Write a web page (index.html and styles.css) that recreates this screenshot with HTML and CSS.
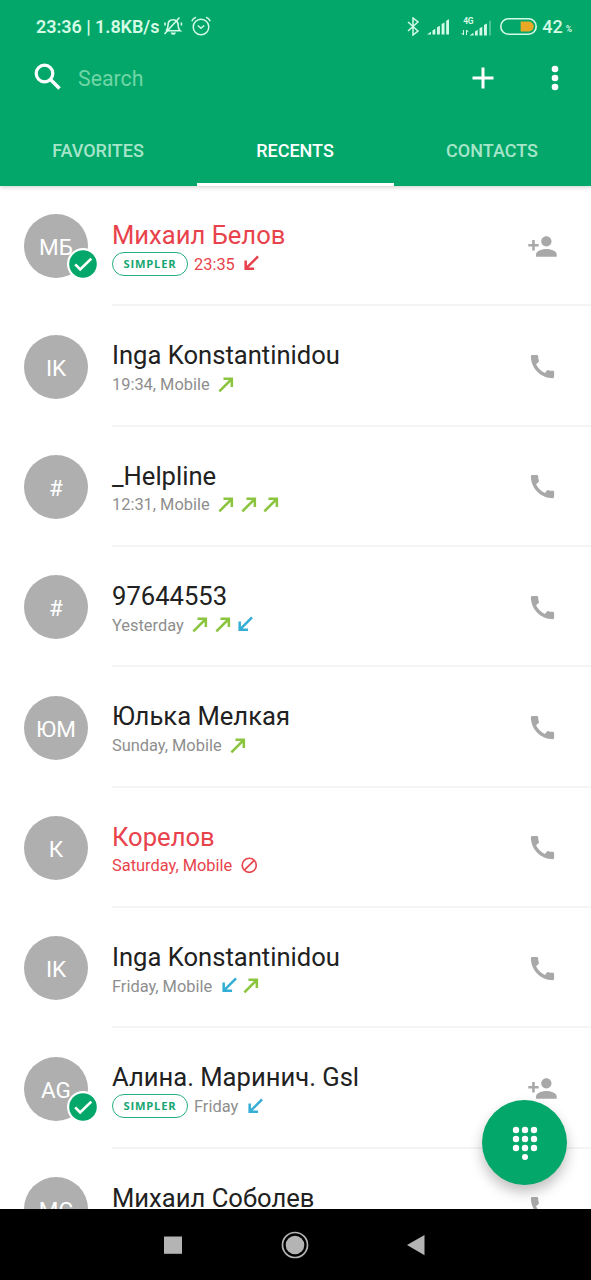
FILE: index.html
```html
<!DOCTYPE html>
<html lang="en">
<head>
<meta charset="utf-8">
<title>Recents</title>
<link rel="stylesheet" href="styles.css">
</head>
<body>
<svg class="sprite" aria-hidden="true">
  <symbol id="made" viewBox="0 0 24 24"><path d="M9 4.800v2.700h5.800L3.700 18.600 5.600 20.500 16.600 9.500V15H19.300V4.800z"/></symbol>
  <symbol id="received" viewBox="0 0 24 24"><path d="M20.200 5.600L18.300 3.700 7.400 14.700V9H4.700v10.300h10.300v-2.700H9.200z"/></symbol>
  <symbol id="blocked" viewBox="0 0 24 24"><circle cx="12" cy="12" r="7.500" fill="none" stroke="currentColor" stroke-width="1.800"/><path d="M7 17L17 7" stroke="currentColor" stroke-width="1.800"/></symbol>
  <symbol id="call" viewBox="0 0 24 24"><path d="M20.010 15.380c-1.230 0-2.420-.2-3.530-.56-.35-.12-.74-.03-1.010.24l-1.570 1.970c-2.830-1.350-5.480-3.900-6.890-6.830l1.950-1.660c.27-.28.35-.67.24-1.020-.37-1.110-.56-2.300-.56-3.530 0-.54-.45-.99-.99-.99H4.190C3.650 3 3 3.240 3 3.990 3 13.280 10.730 21 20.010 21c.71 0 .99-.63.99-1.180v-3.450c0-.54-.45-.99-.99-.99z"/></symbol>
  <symbol id="add-person" viewBox="0 0 24 24"><path d="M15 12c2.210 0 4-1.790 4-4s-1.790-4-4-4-4 1.790-4 4 1.790 4 4 4zm-9-2V7H4v3H1v2h3v3h2v-3h3v-2H6zm9 4c-2.670 0-8 1.340-8 4v2h16v-2c0-2.660-5.330-4-8-4z"/></symbol>
  <symbol id="check" viewBox="0 0 32 32"><circle cx="16" cy="16" r="16" fill="#fff"/><circle cx="16" cy="16" r="13.800" fill="#03a769"/><path d="M8.200 16.400l5 5L24.300 10.600" fill="none" stroke="#fff" stroke-width="2.700"/></symbol>
</svg>
<div class="screen">
  <header class="header">
    <div class="status">
      <div class="status-left">
        <span class="clock">23:36 | 1.8KB/s</span>
        <svg class="bell" viewBox="0 0 20 20"><g fill="none" stroke="currentColor" stroke-width="1.600"><path d="M4 14.800h13.200c-1.600-1.200-2-2.500-2-5C15.200 6 13 3.800 10 3.800S5 6 5 9.400c0 2.500-.4 4-2 5.400"/><path d="M1.500 18L16.500 1.500M2 6.500v3M18.400 6.500v3"/></g><path d="M7.500 16.500h5.500c-.5 1.700-1.500 2.300-2.700 2.300s-2.300-.6-2.800-2.300z" fill="currentColor"/></svg>
        <svg class="alarm" viewBox="0 0 20 20"><g fill="none" stroke="currentColor" stroke-width="1.500"><circle cx="10" cy="11" r="7.800"/><path d="M6.800 9.500l3.200 2.700 3.200-2.700M.8 5.200C1.600 3.300 3 2 5 1.300M19.200 5.200C18.400 3.300 17 2 15 1.300"/></g></svg>
      </div>
      <div class="status-right">
        <svg class="bluetooth" viewBox="0 0 12 19"><path d="M1 5l10 9-5 4V1l5 4-10 9" fill="none" stroke="currentColor" stroke-width="1.500"/></svg>
        <svg class="signal" viewBox="0 0 23 17"><path d="M0 16.500L4 13.700v2.800zM5.500 12.500l2.800-1.700v5.700H5.500zM10 9.300l2.900-1.500v8.700H10zM14.600 6l2.900-1.500v12h-2.900zM19.200 2.700L22 1.200v15.300h-2.800z" fill="currentColor"/></svg>
        <div class="lte">
          <span class="lte-label">4G</span>
          <svg class="lte-bars" viewBox="0 0 31 17"><path d="M8.500 16.500l4-2.800v2.800zM14 12.500l2.700-1.700v5.700H14zM18.500 9.300l2.800-1.500v8.700h-2.800zM23 6l2.900-1.500v12H23z" fill="currentColor"/><path d="M28 2.500L30 1v15.500h-2z" fill="currentColor" opacity=".35"/><path d="M2.500 11v5L.7 14M5.500 16V11l1.600 2" fill="none" stroke="currentColor" stroke-width="1"/></svg>
        </div>
        <svg class="battery" viewBox="0 0 37 17"><path d="M20.700 3.500h8a4.900 4.900 0 0 1 0 10h-8z" fill="#e9a825"/><rect x=".8" y=".8" width="35.400" height="15.400" rx="7.700" fill="none" stroke="currentColor" stroke-width="1.600"/></svg>
        <span class="percent">42</span><span class="percent-sign">%</span>
      </div>
    </div>
    <div class="toolbar">
      <svg class="search-icon" viewBox="0 0 27 27"><circle cx="10.500" cy="10.500" r="8.300" fill="none" stroke="#fff" stroke-width="3.200"/><path d="M16 16l9.500 9.500" stroke="#fff" stroke-width="3.600"/></svg>
      <span class="search-text">Search</span>
      <svg class="plus" viewBox="0 0 22 22"><path d="M11 .5v21M.5 11h21" stroke="#fff" stroke-width="3"/></svg>
      <svg class="more" viewBox="0 0 8 26"><g fill="#fff"><circle cx="4" cy="4" r="3.300"/><circle cx="4" cy="13" r="3.300"/><circle cx="4" cy="22" r="3.300"/></g></svg>
    </div>
    <nav class="tabs">
      <span class="tab">FAVORITES</span>
      <span class="tab tab-active">RECENTS</span>
      <span class="tab">CONTACTS</span>
    </nav>
  </header>

  <main class="list">
    <div class="row">
      <div class="avatar">МБ<svg class="check"><use href="#check"/></svg></div>
      <div class="body"><div class="name missed">Михаил Белов</div>
        <div class="detail missed"><span class="tag">SIMPLER</span><span class="when">23:35</span><svg class="arrow"><use href="#received"/></svg></div></div>
      <svg class="action"><use href="#add-person"/></svg>
    </div>
    <div class="row">
      <div class="avatar">IK</div>
      <div class="body"><div class="name">Inga Konstantinidou</div>
        <div class="detail"><span class="when">19:34, Mobile</span><svg class="arrow out"><use href="#made"/></svg></div></div>
      <svg class="action"><use href="#call"/></svg>
    </div>
    <div class="row">
      <div class="avatar">#</div>
      <div class="body"><div class="name">_Helpline</div>
        <div class="detail"><span class="when">12:31, Mobile</span><svg class="arrow out"><use href="#made"/></svg><svg class="arrow out"><use href="#made"/></svg><svg class="arrow out"><use href="#made"/></svg></div></div>
      <svg class="action"><use href="#call"/></svg>
    </div>
    <div class="row">
      <div class="avatar">#</div>
      <div class="body"><div class="name">97644553</div>
        <div class="detail"><span class="when">Yesterday</span><svg class="arrow out"><use href="#made"/></svg><svg class="arrow out"><use href="#made"/></svg><svg class="arrow in"><use href="#received"/></svg></div></div>
      <svg class="action"><use href="#call"/></svg>
    </div>
    <div class="row">
      <div class="avatar">ЮМ</div>
      <div class="body"><div class="name">Юлька Мелкая</div>
        <div class="detail"><span class="when">Sunday, Mobile</span><svg class="arrow out"><use href="#made"/></svg></div></div>
      <svg class="action"><use href="#call"/></svg>
    </div>
    <div class="row">
      <div class="avatar">К</div>
      <div class="body"><div class="name missed">Корелов</div>
        <div class="detail missed"><span class="when">Saturday, Mobile</span><svg class="arrow"><use href="#blocked"/></svg></div></div>
      <svg class="action"><use href="#call"/></svg>
    </div>
    <div class="row">
      <div class="avatar">IK</div>
      <div class="body"><div class="name">Inga Konstantinidou</div>
        <div class="detail"><span class="when">Friday, Mobile</span><svg class="arrow in"><use href="#received"/></svg><svg class="arrow out"><use href="#made"/></svg></div></div>
      <svg class="action"><use href="#call"/></svg>
    </div>
    <div class="row">
      <div class="avatar">AG<svg class="check"><use href="#check"/></svg></div>
      <div class="body"><div class="name">Алина. Маринич. Gsl</div>
        <div class="detail"><span class="tag">SIMPLER</span><span class="when">Friday</span><svg class="arrow in"><use href="#received"/></svg></div></div>
      <svg class="action"><use href="#add-person"/></svg>
    </div>
    <div class="row">
      <div class="avatar">МС</div>
      <div class="body"><div class="name">Михаил Соболев</div></div>
      <svg class="action"><use href="#call"/></svg>
    </div>
  </main>

  <div class="fab">
    <svg class="dialpad" viewBox="0 0 26 34"><g fill="#fff"><circle cx="4" cy="4" r="3.200"/><circle cx="13" cy="4" r="3.200"/><circle cx="22" cy="4" r="3.200"/><circle cx="4" cy="13" r="3.200"/><circle cx="13" cy="13" r="3.200"/><circle cx="22" cy="13" r="3.200"/><circle cx="4" cy="22" r="3.200"/><circle cx="13" cy="22" r="3.200"/><circle cx="22" cy="22" r="3.200"/><circle cx="13" cy="31" r="3"/></g></svg>
  </div>

  <footer class="navbar">
    <svg class="nav-icon" viewBox="0 0 28 28"><path d="M5 5.500h18v17.300H5z" fill="#b4b4b4"/></svg>
    <svg class="nav-icon" viewBox="0 0 28 28"><circle cx="14" cy="14" r="12.500" fill="none" stroke="#b4b4b4" stroke-width="1.700"/><circle cx="14" cy="14" r="9.300" fill="#b4b4b4"/></svg>
    <svg class="nav-icon" viewBox="0 0 28 28"><path d="M5 14L22.500 4v20.200z" fill="#b4b4b4"/></svg>
  </footer>
</div>
</body>
</html>
```
FILE: styles.css
```css
* { box-sizing: border-box; }
body { margin: 0; background: #fff; font-family: Roboto, "Noto Sans", sans-serif; }
svg { display: block; flex: none; fill: currentColor; }
.sprite { position: absolute; width: 0; height: 0; }
.screen { position: relative; width: 591px; height: 1280px; overflow: hidden; display: flex; flex-direction: column; }

.header { position: relative; height: 186px; flex: none; background: #03a769; box-shadow: 0 1px 5px rgba(0,0,0,.2); display: flex; flex-direction: column; }
.status { height: 52px; padding: 0 19px 0 36px; display: flex; justify-content: space-between; color: #d4fbe6; }
.status-left, .status-right { display: flex; align-items: center; }
.clock { font-size: 18px; font-weight: 600; line-height: 20px; width: 124px; white-space: nowrap; padding-top: 2px; letter-spacing: -.05px; }
.bell { width: 20px; height: 20px; margin-left: 3px; }
.alarm { width: 20px; height: 20px; margin-left: 8px; }
.bluetooth { width: 12px; height: 19px; margin-right: 8px; }
.signal { width: 23px; height: 17px; margin-right: 11px; }
.lte { width: 31px; height: 19px; margin-right: 8px; position: relative; display: flex; align-items: flex-end; }
.lte-label { position: absolute; left: 2px; top: 0; font-size: 8.500px; line-height: 8px; font-weight: 700; letter-spacing: -.3px; }
.lte-bars { width: 31px; height: 17px; }
.battery { width: 37px; height: 17px; margin-right: 5px; }
.percent { font-size: 18px; line-height: 20px; font-weight: 500; padding-top: 1px; }
.percent-sign { font-size: 8.500px; line-height: 8px; font-weight: 600; margin: 5px 0 0 3px; }

.toolbar { height: 52px; padding: 0 32px 0 34px; display: flex; align-items: center; }
.search-icon { width: 27px; height: 27px; margin-top: -3px; }
.search-text { flex: 1; margin-left: 17px; padding-top: 1px; font-size: 21.300px; line-height: 26px; color: #70d6a6; }
.plus { width: 22px; height: 22px; margin-right: 57.500px; }
.more { width: 8px; height: 26px; }

.tabs { flex: 1; display: grid; grid-template-columns: repeat(3, 1fr); }
.tab { display: flex; align-items: center; justify-content: center; padding: 14px 1px 0 0; border-bottom: 3px solid transparent; font-size: 18px; font-weight: 500; color: #a6e5c9; }
.tab-active { color: #fff; border-bottom-color: #fff; }

.list { flex: 1; min-height: 0; overflow: hidden; }
.row { height: 120.350px; padding: 0 33px 0 24px; display: flex; align-items: center; background: linear-gradient(#f4f4f4, #f4f4f4) 112px 100% / 100% 2px no-repeat; }
.avatar { position: relative; width: 64px; height: 64px; flex: none; border-radius: 50%; background: #afafaf; color: #fff; font-size: 22.500px; display: flex; align-items: center; justify-content: center; padding-top: 2px; }
.check { position: absolute; left: 43px; top: 34px; width: 32px; height: 32px; }
.body { flex: 1; height: 100%; margin-left: 24px; padding-top: 34px; }
.name { font-size: 25.600px; line-height: 30px; color: #212121; white-space: nowrap; }
.detail { height: 27px; display: flex; align-items: center; font-size: 16.400px; color: #8e8e8e; white-space: nowrap; }
.name.missed, .detail.missed { color: #e8434c; }
.when { line-height: 20px; padding-top: 2px; }
.arrow { width: 22.500px; height: 22.500px; }
.when + .arrow { margin-left: 5.500px; }
.arrow.out { color: #8bc53f; }
.arrow.in { color: #35aed6; }
.tag { width: 76px; height: 24px; margin-right: 6px; border: 1.500px solid #26b07d; border-radius: 12px; display: flex; align-items: center; justify-content: center; font-family: "Open Sans", sans-serif; font-size: 11.200px; font-weight: 700; letter-spacing: .8px; color: #17a673; }
.action { width: 31px; height: 31px; color: #a8a8a8; }

.fab { position: absolute; left: 482px; top: 1100px; width: 85px; height: 85px; border-radius: 50%; background: #03a769; box-shadow: 0 7px 13px rgba(0,0,0,.25); display: flex; align-items: center; justify-content: center; }
.dialpad { width: 26px; height: 34px; }

.navbar { position: relative; height: 71px; flex: none; background: #000; padding: 0 161px 0 159px; display: flex; align-items: center; justify-content: space-between; }
.nav-icon { width: 28px; height: 28px; }
```
